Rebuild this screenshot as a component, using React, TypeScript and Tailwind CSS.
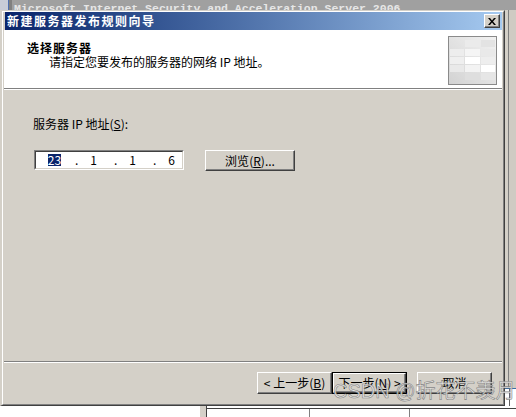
const raised =
    "bg-[#d4d0c8] border border-t-white border-l-white border-r-[#404040] border-b-[#404040] shadow-[inset_-1px_-1px_0_#808080]";

function Key({ k }: { k: string }) {
    return (
        <>
            (<span className="underline underline-offset-1">{k}</span>)
        </>
    );
}

function WizardIcon() {
    const cells = [
        { x: 17, y: 4, w: 15, h: 7, c: "#ebebeb" },
        { x: 33, y: 4, w: 14, h: 7, c: "#e3e3e3" },
        { x: 2, y: 13, w: 14, h: 7, c: "#ededed" },
        { x: 17, y: 13, w: 15, h: 7, c: "#f5f5f5" },
        { x: 33, y: 13, w: 14, h: 7, c: "#e9e9e9" },
        { x: 2, y: 21, w: 14, h: 7, c: "#efefef" },
        { x: 17, y: 21, w: 15, h: 7, c: "#ffffff" },
        { x: 33, y: 21, w: 14, h: 7, c: "#eeeeee" },
        { x: 2, y: 29, w: 14, h: 7, c: "#e9e9e9" },
        { x: 17, y: 29, w: 15, h: 7, c: "#f3f3f3" },
        { x: 33, y: 29, w: 14, h: 7, c: "#ffffff" },
        { x: 17, y: 37, w: 15, h: 7, c: "#dedede" },
        { x: 33, y: 37, w: 14, h: 7, c: "#e6e6e6" },
    ];
    return (
        <svg width="49" height="49" viewBox="0 0 49 49" className="block">
            <defs>
                <linearGradient id="wz" x1="1" y1="0" x2="0" y2="1">
                    <stop offset="0" stopColor="#f2f2f2" />
                    <stop offset="1" stopColor="#d2d2d2" />
                </linearGradient>
            </defs>
            <rect x="0.5" y="0.5" width="48" height="48" fill="url(#wz)" stroke="#8a8a8a" />
            {cells.map((c, i) => (
                <rect key={i} x={c.x} y={c.y} width={c.w} height={c.h} fill={c.c} />
            ))}
        </svg>
    );
}

function WizardDialog() {
    return (
        <div className="w-[505px] h-full border-t border-l-2 border-r border-b border-t-[#d4d0c8] border-l-[#d4d0c8] border-r-[#404040] border-b-[#404040] bg-[#d4d0c8]">
            <div className="h-full flex flex-col border border-t-white border-l-white border-r-[#808080] border-b-[#808080] pl-[2px] pr-[1px] pb-[1px]">
                {/* title bar */}
                <div className="h-[18px] flex items-center justify-between bg-linear-to-r from-[#0a246a] to-[#a6caf0] pl-[2px] pr-[2px]">
                    <span className="text-white font-bold tracking-[1.5px]">新建服务器发布规则向导</span>
                    <div className={`w-[16px] h-[14px] flex items-center justify-center ${raised}`}>
                        <svg width="8" height="7" viewBox="0 0 8 7">
                            <path d="M0 0h2l2 2.5L6 0h2L5 3.5 8 7H6L4 4.5 2 7H0l3-3.5z" fill="#000" />
                        </svg>
                    </div>
                </div>

                {/* header */}
                <div className="h-[58px] bg-white flex justify-between -ml-[1px]">
                    <div className="pl-[23px] pt-[12px]">
                        <div className="font-bold tracking-[1px]">选择服务器</div>
                        <div className="mt-[2px] pl-[22px]">请指定您要发布的服务器的网络 IP 地址。</div>
                    </div>
                    <div className="mt-[6px] mr-[5px]">
                        <WizardIcon />
                    </div>
                </div>
                <div className="h-[2px] border-t border-t-[#808080] border-b border-b-white -ml-[1px]" />

                {/* body */}
                <div className="h-[271px] pl-[28px] pt-[28px]">
                    <div>
                        服务器 IP 地址<Key k="S" />:
                    </div>
                    <div className="flex items-start mt-[20px]">
                        <div className="ml-[1px] w-[150px] h-[20px] border border-t-[#808080] border-l-[#808080] border-r-white border-b-white">
                            <div className="h-full bg-white border border-t-[#404040] border-l-[#404040] border-r-[#d4d0c8] border-b-[#d4d0c8] flex items-center">
                                {["23", "1", "1", "6"].map((o, i) => (
                                    <div key={i} className="flex items-center">
                                        <span className="w-[37px] flex justify-center">
                                            <span className={i === 0 ? "bg-[#0a246a] text-white" : ""}>{o}</span>
                                        </span>
                                        {i < 3 && <span className="w-0 pl-[2px] overflow-visible">.</span>}
                                    </div>
                                ))}
                            </div>
                        </div>
                        <div className={`ml-[21px] w-[90px] h-[21px] flex items-center justify-center ${raised}`}>
                            浏览<Key k="R" />...
                        </div>
                    </div>
                </div>
                <div className="h-[2px] border-t border-t-[#808080] border-b border-b-white -ml-[1px]" />

                {/* buttons */}
                <div className="h-[40px] flex justify-end items-start pt-[9px] pr-[10px]">
                    <div className={`w-[75px] h-[22px] flex items-center justify-center ${raised}`}>
                        &lt; 上一步<Key k="B" />
                    </div>
                    <div className="w-[75px] h-[22px] border border-black">
                        <div className={`h-full flex items-center justify-center ${raised}`}>
                            下一步<Key k="N" /> &gt;
                        </div>
                    </div>
                    <div className={`ml-[10px] w-[75px] h-[22px] flex items-center justify-center ${raised}`}>
                        取消
                    </div>
                </div>
            </div>
        </div>
    );
}

export default function App() {
    return (
        <div className="relative w-[516px] h-[417px] overflow-hidden bg-white font-['Noto_Sans_CJK_SC',sans-serif] text-[12px] leading-[12px] text-black">
            {/* window behind */}
            <div className="h-[10px] flex bg-[#a0a0a0] overflow-hidden">
                <div className="w-[9px] bg-[#c8ccd8] border-r border-[#5070b0]" />
                <div className="w-[3px] bg-[#808080]" />
                <span className="pl-[2px] pt-[2px] font-['Liberation_Mono',monospace] font-bold text-[11.5px] leading-[14px] text-[#e6e6e6] whitespace-nowrap">
                    Microsoft Internet Security and Acceleration Server 2006
                </span>
            </div>

            <div className="flex h-[396px]">
                <WizardDialog />
                <div className="flex-1 flex flex-col">
                    <div className="flex-1 flex">
                        <div className="w-[3px] bg-[#d4d0c8]" />
                        <div className="w-[1px] bg-[#808080]" />
                        <div className="flex-1 bg-[#cfcbc3]" />
                    </div>
                    <div className="h-[18px] border-t border-[#3a6ea5] flex bg-white">
                        <div className="w-[4px]" />
                        <div className="w-[1px] bg-[#606060]" />
                    </div>
                </div>
            </div>

            {/* strip below the dialog */}
            <div className="h-[11px] flex">
                <div className="w-[200px]" />
                <div className="w-[7px] bg-[#d4d0c8] border-r border-[#404040]" />
                <div className="flex-1 flex flex-col">
                    <div className="h-[2px]" />
                    <div className="flex-1 flex border-t border-[#404040]">
                        <div className="w-[103px] border-r border-[#808080]" />
                        <div className="w-[100px] border-r border-[#808080]" />
                        <div className="flex-1" />
                    </div>
                </div>
            </div>

            {/* watermark */}
            <div className="absolute left-[333px] top-[381px] text-[20px] leading-[20px] font-['Liberation_Sans','Noto_Sans_CJK_SC',sans-serif] text-[#e8e8e8]/85 [-webkit-text-stroke:0.6px_rgba(100,100,100,0.75)] whitespace-nowrap pointer-events-none">
                CSDN @折花不羡月
            </div>
        </div>
    );
}
